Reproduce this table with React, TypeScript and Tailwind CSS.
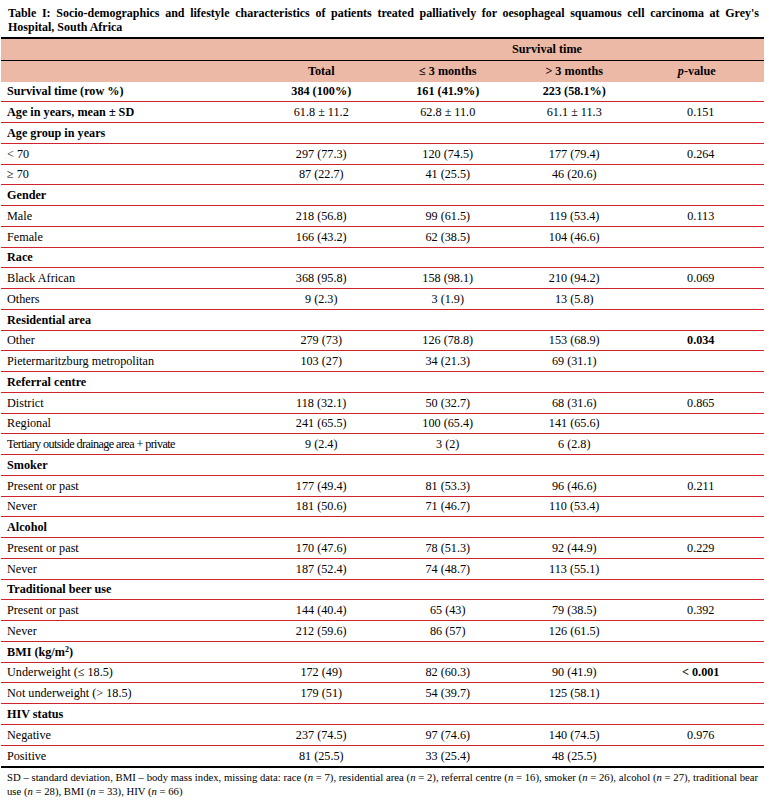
import React from 'react';

type Row = {
  label: React.ReactNode;
  head?: boolean;
  labelBold?: boolean;
  allBold?: boolean;
  tight?: boolean;
  values?: string[];
  pBold?: boolean;
};

const rows: Row[] = [
  { label: 'Survival time (row %)', allBold: true, labelBold: true, values: ['384 (100%)', '161 (41.9%)', '223 (58.1%)', ''] },
  { label: 'Age in years, mean ± SD', labelBold: true, values: ['61.8 ± 11.2', '62.8 ± 11.0', '61.1 ± 11.3', '0.151'] },
  { label: 'Age group in years', head: true },
  { label: '< 70', values: ['297 (77.3)', '120 (74.5)', '177 (79.4)', '0.264'] },
  { label: '≥ 70', values: ['87 (22.7)', '41 (25.5)', '46 (20.6)', ''] },
  { label: 'Gender', head: true },
  { label: 'Male', values: ['218 (56.8)', '99 (61.5)', '119 (53.4)', '0.113'] },
  { label: 'Female', values: ['166 (43.2)', '62 (38.5)', '104 (46.6)', ''] },
  { label: 'Race', head: true },
  { label: 'Black African', values: ['368 (95.8)', '158 (98.1)', '210 (94.2)', '0.069'] },
  { label: 'Others', values: ['9 (2.3)', '3 (1.9)', '13 (5.8)', ''] },
  { label: 'Residential area', head: true },
  { label: 'Other', values: ['279 (73)', '126 (78.8)', '153 (68.9)', '0.034'], pBold: true },
  { label: 'Pietermaritzburg metropolitan', values: ['103 (27)', '34 (21.3)', '69 (31.1)', ''] },
  { label: 'Referral centre', head: true },
  { label: 'District', values: ['118 (32.1)', '50 (32.7)', '68 (31.6)', '0.865'] },
  { label: 'Regional', values: ['241 (65.5)', '100 (65.4)', '141 (65.6)', ''] },
  { label: 'Tertiary outside drainage area + private', tight: true, values: ['9 (2.4)', '3 (2)', '6 (2.8)', ''] },
  { label: 'Smoker', head: true },
  { label: 'Present or past', values: ['177 (49.4)', '81 (53.3)', '96 (46.6)', '0.211'] },
  { label: 'Never', values: ['181 (50.6)', '71 (46.7)', '110 (53.4)', ''] },
  { label: 'Alcohol', head: true },
  { label: 'Present or past', values: ['170 (47.6)', '78 (51.3)', '92 (44.9)', '0.229'] },
  { label: 'Never', values: ['187 (52.4)', '74 (48.7)', '113 (55.1)', ''] },
  { label: 'Traditional beer use', head: true },
  { label: 'Present or past', values: ['144 (40.4)', '65 (43)', '79 (38.5)', '0.392'] },
  { label: 'Never', values: ['212 (59.6)', '86 (57)', '126 (61.5)', ''] },
  { label: <>BMI (kg/m<sup className="text-[8px]">2</sup>)</>, head: true },
  { label: 'Underweight (≤ 18.5)', values: ['172 (49)', '82 (60.3)', '90 (41.9)', '< 0.001'], pBold: true },
  { label: 'Not underweight (> 18.5)', values: ['179 (51)', '54 (39.7)', '125 (58.1)', ''] },
  { label: 'HIV status', head: true },
  { label: 'Negative', values: ['237 (74.5)', '97 (74.6)', '140 (74.5)', '0.976'] },
  { label: 'Positive', values: ['81 (25.5)', '33 (25.4)', '48 (25.5)', ''] },
];

const grid = 'grid grid-cols-[257px_126.5px_126.5px_126.5px_126.5px]';

const App: React.FC = () => {
  return (
    <div className="w-[769px] h-[803px] bg-white text-black [font-family:'Liberation_Serif','Times_New_Roman',serif] overflow-hidden">
      <p className="pt-[6px] pl-[8px] pr-[10px] text-[12px] leading-[14px] font-bold text-justify">
        Table I: Socio-demographics and lifestyle characteristics of patients treated palliatively for oesophageal squamous cell carcinoma at Grey's Hospital, South Africa
      </p>

      <div className="ml-[1px] mt-[3px] w-[763px] border-t-2 border-b-2 border-black text-[12.2px]">
        <div className="bg-[#edb9a7] font-bold">
          <div className={`${grid} h-[21.7px] items-center border-b border-black`}>
            <div />
            <div className="col-span-4 pl-[72px] text-center">Survival time</div>
          </div>
          <div className={`${grid} h-[21px] items-center`}>
            <div />
            <div className="text-center">Total</div>
            <div className="text-center">≤ 3 months</div>
            <div className="text-center">&gt; 3 months</div>
            <div className="text-center pr-[8px]">
              <i>p</i>-value
            </div>
          </div>
        </div>

        {rows.map((r, i) => (
          <div
            key={i}
            className={`${grid} h-[20.75px] items-center ${i < rows.length - 1 ? 'border-b border-[#d0232b]' : ''} ${r.allBold ? 'font-bold' : ''}`}
          >
            <div
              className={`pl-[6px] whitespace-nowrap ${r.head || r.labelBold ? 'font-bold' : ''} ${r.tight ? 'tracking-[-0.6px]' : ''}`}
            >
              {r.label}
            </div>
            {r.values?.map((v, j) => (
              <div key={j} className={`text-center ${j === 3 && r.pBold ? 'font-bold' : ''}`}>
                {v}
              </div>
            ))}
          </div>
        ))}
      </div>

      <p className="pt-[2px] pl-[7px] pr-[11px] text-[10.7px] leading-[14px] text-justify">
        SD – standard deviation, BMI – body mass index, missing data: race (<i>n</i> = 7), residential area (<i>n</i> = 2), referral centre (<i>n</i> = 16), smoker (<i>n</i> = 26), alcohol (<i>n</i> = 27), traditional bear use (<i>n</i> = 28), BMI (<i>n</i> = 33), HIV (<i>n</i> = 66)
      </p>
    </div>
  );
};

export default App;
